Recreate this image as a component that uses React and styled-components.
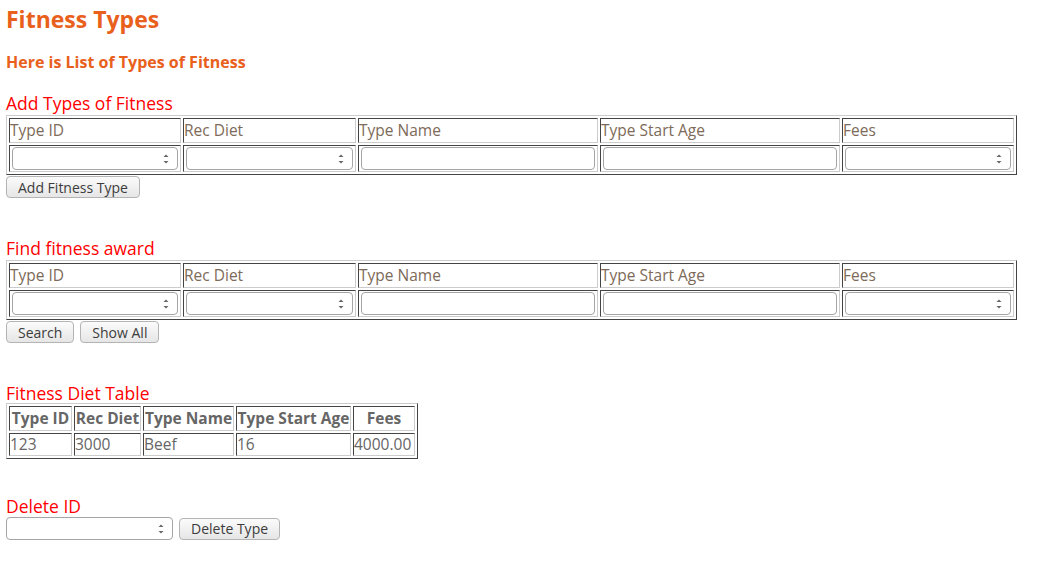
import React from "react";
import styled, { createGlobalStyle } from "styled-components";

const GlobalStyle = createGlobalStyle`
  body {
    margin: 0;
    background: #ffffff;
    font-family: "Open Sans", "DejaVu Sans", sans-serif;
    color: #666666;
  }
`;

const Page = styled.div`
  padding: 4px 6px;
`;

const Title = styled.h1`
  margin: 0;
  font-size: 23px;
  line-height: 30px;
  font-weight: 700;
  color: #e8601c;
`;

const SubTitle = styled.h4`
  margin: 17px 0 0;
  font-size: 16px;
  line-height: 22px;
  font-weight: 700;
  color: #e8601c;
`;

const SectionTitle = styled.div`
  margin-top: ${(props) => props.gap || 0}px;
  margin-bottom: ${(props) => (props.tight ? -1 : 1)}px;
  font-size: 17.5px;
  line-height: 22px;
  color: #ff0000;
`;

const Grid = styled.table`
  border-collapse: separate;
  border-spacing: 2px;
  border: 1px solid;
  border-color: #cccccc #444444 #444444 #cccccc;
  width: ${(props) => props.width}px;
  table-layout: fixed;
`;

const Cell = styled.td`
  border: 1px solid;
  border-color: #444444 #cccccc #cccccc #444444;
  padding: ${(props) => (props.tall ? "1px 0" : "0")};
  font-size: 15.5px;
  line-height: 21px;
  color: ${(props) => props.color || "#666666"};
  font-weight: ${(props) => (props.bold ? 700 : 400)};
  text-align: ${(props) => props.align || "left"};
  white-space: nowrap;
  overflow: hidden;
`;

const InputCell = styled(Cell)`
  padding: 1px 2px;
`;

const FieldBox = styled.div`
  position: relative;
  box-sizing: border-box;
  height: 23px;
  width: ${(props) => (props.width ? `${props.width}px` : "100%")};
  border: 1px solid #a5a5a5;
  border-radius: 4px;
  background: #ffffff;
`;

const Spin = styled.svg`
  position: absolute;
  right: 8px;
  top: 6px;
`;

const Buttons = styled.div`
  display: flex;
  gap: 6px;
  margin-top: ${(props) => props.gap || 0}px;
`;

const Button = styled.button`
  box-sizing: border-box;
  height: 22px;
  padding: 0 11px;
  border: 1px solid #b4b4b4;
  border-radius: 4px;
  background: linear-gradient(#fbfbfb, #e6e6e6);
  font-family: "Open Sans", "DejaVu Sans", sans-serif;
  font-size: 14px;
  color: #3c3c3c;
`;

const DeleteRow = styled.div`
  display: flex;
  align-items: center;
  gap: 6px;
  margin-top: -1px;
`;

const Spinner = () => (
  <Spin width="6" height="10" viewBox="0 0 6 10">
    <path d="M3 0.5 L5.5 3 L0.5 3 Z" fill="#666" />
    <path d="M0.5 7 L5.5 7 L3 9.5 Z" fill="#666" />
  </Spin>
);

const Field = ({ number, width }) => (
  <FieldBox width={width}>{number && <Spinner />}</FieldBox>
);

const columns = [
  { label: "Type ID", width: 172, number: true },
  { label: "Rec Diet", width: 173, number: true },
  { label: "Type Name", width: 240 },
  { label: "Type Start Age", width: 240 },
  { label: "Fees", width: 172, number: true },
];

const FormTable = () => (
  <Grid width={1010}>
    <colgroup>
      {columns.map((c) => (
        <col key={c.label} style={{ width: c.width }} />
      ))}
    </colgroup>
    <tbody>
      <tr>
        {columns.map((c) => (
          <Cell key={c.label} color="#7d6a58" tall>
            {c.label}
          </Cell>
        ))}
      </tr>
      <tr>
        {columns.map((c) => (
          <InputCell key={c.label}>
            <Field number={c.number} />
          </InputCell>
        ))}
      </tr>
    </tbody>
  </Grid>
);

const dietCols = [
  { label: "Type ID", value: "123", width: 63 },
  { label: "Rec Diet", value: "3000", width: 67 },
  { label: "Type Name", value: "Beef", width: 91 },
  { label: "Type Start Age", value: "16", width: 115 },
  { label: "Fees", value: "4000.00", width: 62 },
];

const DietTable = () => (
  <Grid width={410}>
    <colgroup>
      {dietCols.map((c) => (
        <col key={c.label} style={{ width: c.width }} />
      ))}
    </colgroup>
    <tbody>
      <tr>
        {dietCols.map((c) => (
          <Cell key={c.label} bold align="center" tall>
            {c.label}
          </Cell>
        ))}
      </tr>
      <tr>
        {dietCols.map((c) => (
          <Cell key={c.label}>{c.value}</Cell>
        ))}
      </tr>
    </tbody>
  </Grid>
);

export default function App() {
  return (
    <Page>
      <GlobalStyle />
      <Title>Fitness Types</Title>
      <SubTitle>Here is List of Types of Fitness</SubTitle>
      <SectionTitle gap={19}>Add Types of Fitness</SectionTitle>
      <FormTable />
      <Buttons gap={1}>
        <Button>Add Fitness Type</Button>
      </Buttons>
      <SectionTitle gap={39}>Find fitness award</SectionTitle>
      <FormTable />
      <Buttons gap={1}>
        <Button>Search</Button>
        <Button>Show All</Button>
      </Buttons>
      <SectionTitle gap={39} tight>
        Fitness Diet Table
      </SectionTitle>
      <DietTable />
      <SectionTitle gap={36}>Delete ID</SectionTitle>
      <DeleteRow>
        <Field number width={167} />
        <Button>Delete Type</Button>
      </DeleteRow>
    </Page>
  );
}
